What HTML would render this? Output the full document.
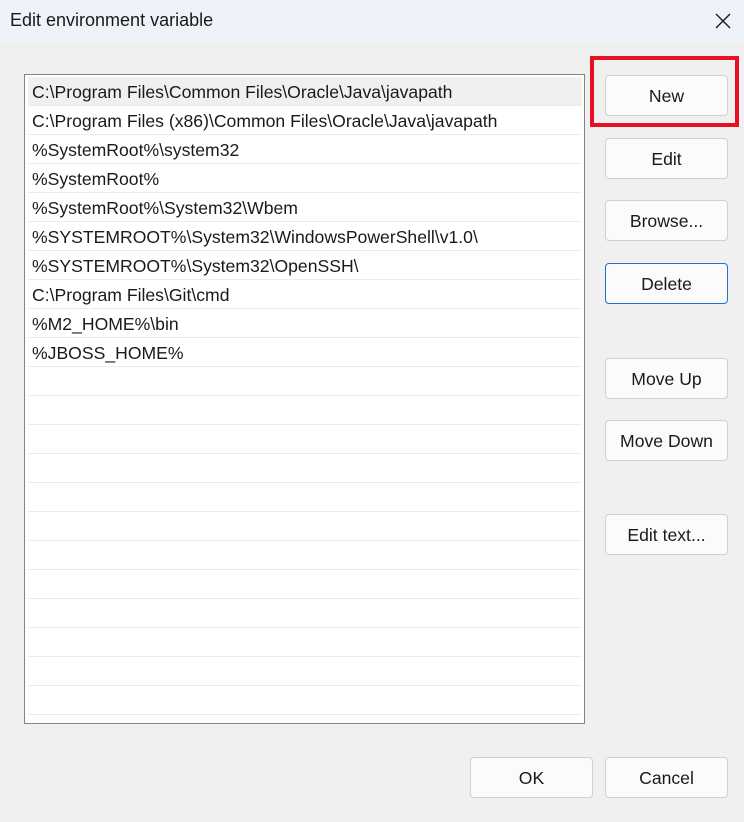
<!DOCTYPE html>
<html><head><meta charset="utf-8"><style>
*{margin:0;padding:0;box-sizing:border-box}
body{width:744px;height:822px;background:#f0f0f0;font-family:"Liberation Sans",sans-serif;font-size:16px;color:#1a1a1a;position:relative;overflow:hidden}
.title{position:absolute;left:0;top:0;width:744px;height:43px;background:#eef2f9}
.title span{position:absolute;left:10px;top:10px;font-size:18px}
.close{position:absolute;left:714px;top:12px}
.list{position:absolute;left:24px;top:74px;width:561px;height:650px;background:#fff;border:1px solid #848484;overflow:hidden}
.row{position:absolute;left:3px;width:554px;height:29px;border-bottom:1px solid #ececec;padding-left:4px;line-height:31px;font-size:17.6px;white-space:nowrap}
.sel{background:#f0f0f0}
.btn{position:absolute;width:123px;height:41px;background:#fbfbfb;border:1px solid #d0d0d0;border-radius:4px;text-align:center;line-height:41px;font-size:17.6px}
.def{border:1px solid #1f72c7}
.red{position:absolute;left:590px;top:56px;width:149px;height:71px;border:4px solid #e81123}
</style></head><body>
<div class="title"><span>Edit environment variable</span>
<svg class="close" width="18" height="18" viewBox="0 0 18 18"><path d="M2 2L16 16M16 2L2 16" stroke="#1a1a1a" stroke-width="1.4"/></svg></div>
<div class="list">
<div class="row sel" style="top:2px">C:\Program Files\Common Files\Oracle\Java\javapath</div>
<div class="row" style="top:31px">C:\Program Files (x86)\Common Files\Oracle\Java\javapath</div>
<div class="row" style="top:60px">%SystemRoot%\system32</div>
<div class="row" style="top:89px">%SystemRoot%</div>
<div class="row" style="top:118px">%SystemRoot%\System32\Wbem</div>
<div class="row" style="top:147px">%SYSTEMROOT%\System32\WindowsPowerShell\v1.0\</div>
<div class="row" style="top:176px">%SYSTEMROOT%\System32\OpenSSH\</div>
<div class="row" style="top:205px">C:\Program Files\Git\cmd</div>
<div class="row" style="top:234px">%M2_HOME%\bin</div>
<div class="row" style="top:263px">%JBOSS_HOME%</div>
<div class="row" style="top:292px"></div><div class="row" style="top:321px"></div>
<div class="row" style="top:350px"></div><div class="row" style="top:379px"></div>
<div class="row" style="top:408px"></div><div class="row" style="top:437px"></div>
<div class="row" style="top:466px"></div><div class="row" style="top:495px"></div>
<div class="row" style="top:524px"></div><div class="row" style="top:553px"></div>
<div class="row" style="top:582px"></div><div class="row" style="top:611px"></div>
</div>
<div class="btn" style="left:605px;top:75px">New</div>
<div class="red"></div>
<div class="btn" style="left:605px;top:138px">Edit</div>
<div class="btn" style="left:605px;top:200px">Browse...</div>
<div class="btn def" style="left:605px;top:263px">Delete</div>
<div class="btn" style="left:605px;top:358px">Move Up</div>
<div class="btn" style="left:605px;top:420px">Move Down</div>
<div class="btn" style="left:605px;top:514px">Edit text...</div>
<div class="btn" style="left:470px;top:757px">OK</div>
<div class="btn" style="left:605px;top:757px">Cancel</div>
</body></html>
